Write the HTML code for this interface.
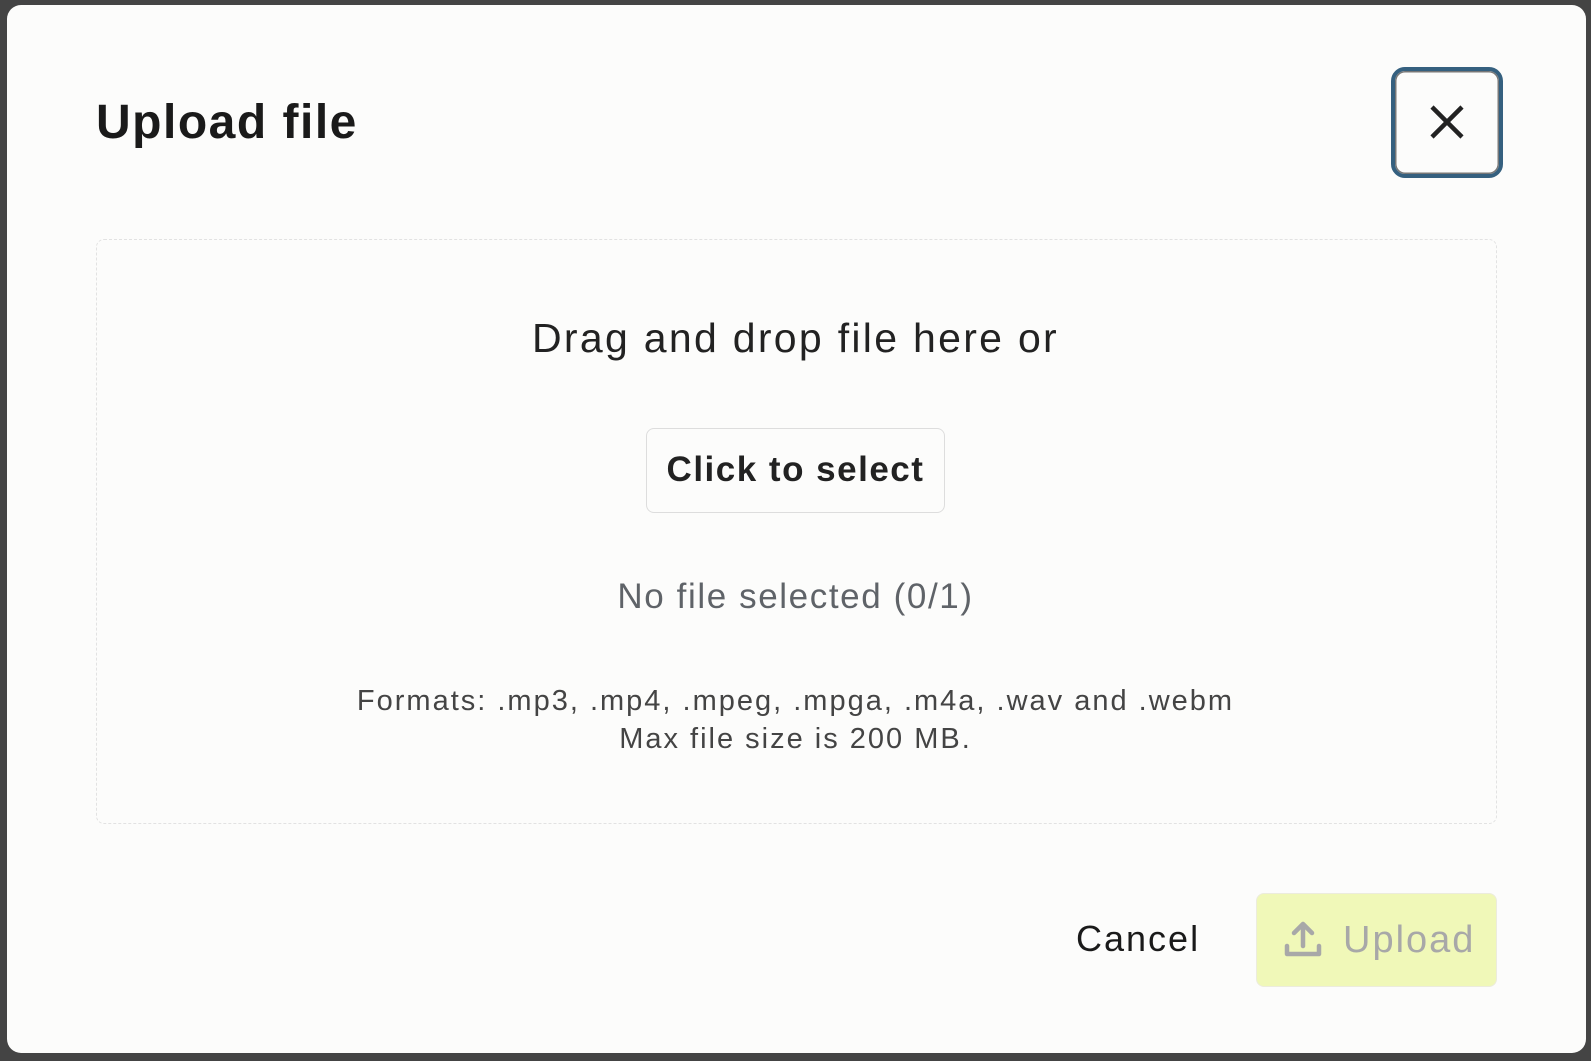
<!DOCTYPE html>
<html><head><style>
body{margin:0;width:1591px;height:1061px;background:#444;font-family:"Liberation Sans",sans-serif;overflow:hidden;position:relative}
.m{position:absolute;left:7px;top:5px;width:1579px;height:1048px;background:#fcfcfb;border-radius:14px}
.t{position:absolute;left:96px;top:95px;font-size:48px;font-weight:bold;color:#1a1a1a;letter-spacing:1.5px}
.x{position:absolute;left:1391px;top:67px;width:112px;height:111px;border:4px solid #35607f;border-radius:14px;box-sizing:border-box;box-shadow:inset 0 0 0 1.5px #777;background:#fcfcfb}
.d{position:absolute;left:96px;top:239px;width:1401px;height:585px;border:1.5px dashed #e2e2e2;border-radius:8px;box-sizing:border-box}
.c{position:absolute;left:0;width:1591px;text-align:center}
.b{position:absolute;left:646px;top:428px;width:299px;height:85px;border:1.5px solid #ddd;border-radius:8px;box-sizing:border-box;font-size:35px;font-weight:bold;color:#222;text-align:center;line-height:82px;letter-spacing:1.5px}
.u{position:absolute;left:1256px;top:893px;width:241px;height:94px;background:#f0f8b8;border:1.5px solid #ececdc;border-radius:8px;box-sizing:border-box;color:#a8a8a8;font-size:38px;line-height:92px;letter-spacing:2px}
</style></head><body>
<div class="m"></div>
<div class="t">Upload file</div>
<div class="x"><svg width="104" height="103" viewBox="0 0 104 103" style="display:block"><path d="M37 36L67 66M67 36L37 66" stroke="#222" stroke-width="4.5"/></svg></div>
<div class="d"></div>
<div class="c" style="top:315px;font-size:41px;color:#222;letter-spacing:2.3px">Drag and drop file here or</div>
<div class="b">Click to select</div>
<div class="c" style="top:577px;font-size:35px;color:#5f6368;letter-spacing:1.6px">No file selected (0/1)</div>
<div class="c" style="top:682px;font-size:29px;color:#444;line-height:38px;letter-spacing:2px">Formats: .mp3, .mp4, .mpeg, .mpga, .m4a, .wav and .webm<br>Max file size is 200 MB.</div>
<div style="position:absolute;left:1076px;top:918px;font-size:36px;color:#1a1a1a;letter-spacing:2px">Cancel</div>
<div class="u"><svg width="44" height="44" viewBox="0 0 44 44" style="position:absolute;left:24px;top:24px"><path d="M22 6V28M13 15L22 6L31 15M6 28V36H38V28" fill="none" stroke="#a8a8a8" stroke-width="4.5" stroke-linecap="round" stroke-linejoin="round"/></svg><span style="position:absolute;left:86px">Upload</span></div>
</body></html>
